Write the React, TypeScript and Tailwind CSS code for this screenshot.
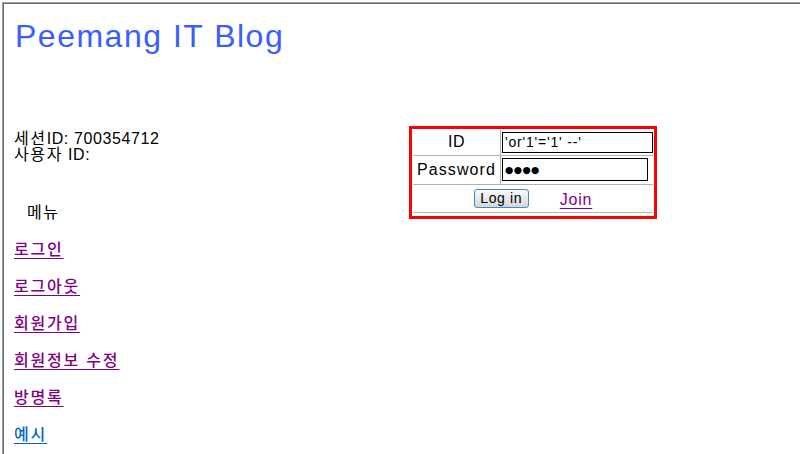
import React from "react";

const F = { fontFamily: '"Liberation Sans", "Noto Sans CJK KR", Arial, sans-serif' };

function K({ children }: { children: React.ReactNode }) {
  return <span className="tracking-[1.6px]">{children}</span>;
}

export default function App() {
  const links = ["로그인", "로그아웃", "회원가입", "회원정보 수정", "방명록"];
  return (
    <div className="w-[800px] h-[454px] overflow-hidden bg-white pt-[2px] pl-[2px]" style={F}>
      <div className="h-full border-t border-l border-[#a0a0a0]">
        <div className="h-full border-t border-l border-[#696969] text-black">
          <div className="pl-[11px] pt-[16px] h-[122px]">
            <div className="text-[32px] leading-[32px] tracking-[1.5px] text-[#3b5cff]">Peemang IT Blog</div>
          </div>
          <div className="flex items-start">
            <div className="w-[405px] pl-[10px] pt-[5px] text-[16px] leading-[16px]">
              <div className="tracking-[0.6px]">
                <K>세션</K>ID: 700354712
              </div>
              <div className="tracking-[0.6px]">
                <K>사용자</K> ID:
              </div>
              <div className="mt-[42px] pl-[13px]">
                <K>메뉴</K>
              </div>
              <div className="mt-[21px] flex flex-col gap-[21px] font-medium">
                {links.map((l) => (
                  <a key={l} href="#" className="text-[#800080] underline underline-offset-[3px] w-fit tracking-[1.8px]">
                    {l}
                  </a>
                ))}
                <a href="#" className="text-[#0066cc] underline underline-offset-[3px] w-fit tracking-[1.8px]">
                  예시
                </a>
              </div>
            </div>
            <div className="border-[3px] border-[#ff0000] p-[1px] w-[248px]">
              <table className="w-full border-collapse text-[16px]">
                <tbody>
                  <tr className="h-[25px] border-b border-[#b0b0b0]">
                    <td className="w-[88px] text-center border-r border-[#b0b0b0] tracking-[0.5px]">ID</td>
                    <td className="pl-[1px]">
                      <input
                        readOnly
                        value="'or'1'='1' --'"
                        className="w-[151px] h-[21px] border border-black px-[2px] text-[14px] tracking-[0.8px] outline-none block"
                        style={F}
                      />
                    </td>
                  </tr>
                  <tr className="h-[29px] border-b border-[#b0b0b0]">
                    <td className="text-center border-r border-[#b0b0b0] tracking-[1.1px]">Password</td>
                    <td className="pl-[1px]">
                      <div
                        className="w-[146px] h-[23px] border border-black pl-[2px] text-[9.5px] leading-[21px] tracking-[0.4px] text-black"
                        style={{ fontFamily: '"DejaVu Sans", sans-serif' }}
                      >
                        ●●●●
                      </div>
                    </td>
                  </tr>
                  <tr className="h-[25px] border-b border-[#b0b0b0]">
                    <td colSpan={2} className="text-center">
                      <div className="flex items-center justify-center">
                        <button
                          className="w-[55px] h-[19px] rounded-[3px] border border-[#3c8dc8] bg-gradient-to-b from-[#fbfbfb] to-[#d6d6d6] text-[14px] leading-[15px] tracking-[0.6px] text-black"
                          style={F}
                        >
                          Log in
                        </button>
                        <a href="#" className="ml-[31px] mt-[3px] text-[#800080] underline underline-offset-[3px] tracking-[0.8px]">
                          Join
                        </a>
                      </div>
                    </td>
                  </tr>
                </tbody>
              </table>
              <div className="h-[2px]" />
            </div>
          </div>
        </div>
      </div>
    </div>
  );
}
